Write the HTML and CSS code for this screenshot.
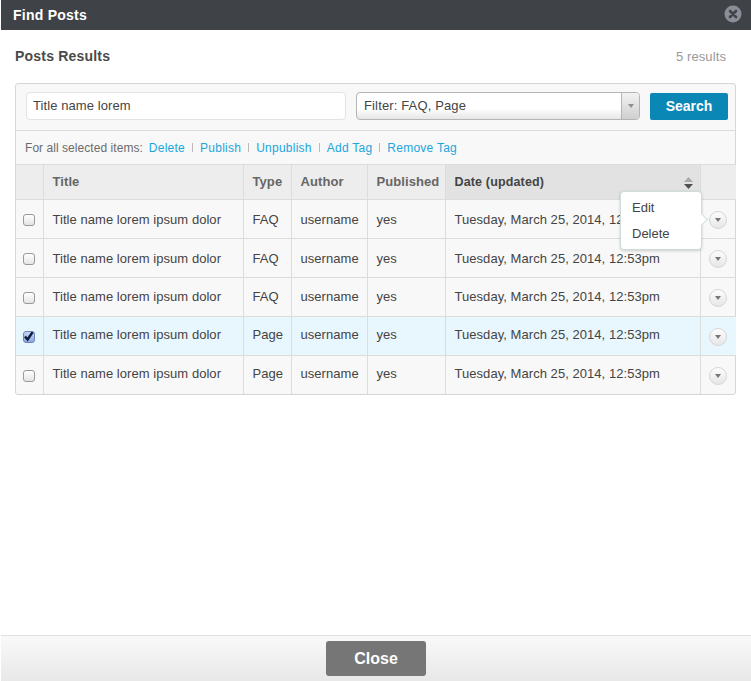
FILE: index.html
```html
<!DOCTYPE html>
<html lang="en">
<head>
<meta charset="utf-8">
<title>Find Posts</title>
<link rel="stylesheet" href="styles.css">
</head>
<body>
<div class="dialog">
  <header class="titlebar">
    <h1 class="dialog-title">Find Posts</h1>
    <button class="dialog-x" type="button" aria-label="Close">
      <svg width="18" height="18" viewBox="0 0 18 18"><circle cx="9" cy="9" r="8.5" fill="#8b8e98"/><path d="M6 6l6 6M12 6l-6 6" stroke="#3f4247" stroke-width="2.6" stroke-linecap="round"/></svg>
    </button>
  </header>
  <main class="content">
    <div class="results-head">
      <h2 class="results-title">Posts Results</h2>
      <span class="results-count">5 results</span>
    </div>
    <section class="panel">
      <div class="searchbar">
        <input class="search-input" type="text" value="Title name lorem">
        <div class="filter">
          <span class="filter-text">Filter: FAQ, Page</span>
          <span class="filter-arrow"><svg width="6" height="4" viewBox="0 0 6 4"><path d="M0 0h6L3 4z" fill="#8f8f8f"/></svg></span>
        </div>
        <button class="search-btn" type="button">Search</button>
      </div>
      <div class="bulk">
        <span class="bulk-label">For all selected items:</span>
        <a class="bulk-link" href="#">Delete</a><span class="bulk-sep"></span>
        <a class="bulk-link" href="#">Publish</a><span class="bulk-sep"></span>
        <a class="bulk-link" href="#">Unpublish</a><span class="bulk-sep"></span>
        <a class="bulk-link" href="#">Add Tag</a><span class="bulk-sep"></span>
        <a class="bulk-link" href="#">Remove Tag</a>
      </div>
      <table class="posts">
        <colgroup>
          <col class="c-check"><col class="c-title"><col class="c-type"><col class="c-author"><col class="c-pub"><col class="c-date"><col class="c-act">
        </colgroup>
        <thead>
          <tr>
            <th></th><th>Title</th><th>Type</th><th>Author</th><th>Published</th>
            <th class="sorted">Date (updated)
              <svg class="sort-icon" width="9" height="12" viewBox="0 0 9 12"><path d="M4.5 0L9 5H0z" fill="#a9a9a9"/><path d="M4.5 12L0 7h9z" fill="#4f4f4f"/></svg>
            </th>
            <th></th>
          </tr>
        </thead>
        <tbody>
          <tr class="row-a">
            <td class="cell-check"><input class="check" type="checkbox"></td><td>Title name lorem ipsum dolor</td><td>FAQ</td><td>username</td><td>yes</td><td>Tuesday, March 25, 2014, 12:53pm</td>
            <td class="cell-act"><button class="row-btn" type="button" aria-label="Actions"><svg width="6" height="4" viewBox="0 0 6 4"><path d="M0 0h6L3 4z" fill="#777"/></svg></button></td>
          </tr>
          <tr class="row-a">
            <td class="cell-check"><input class="check" type="checkbox"></td><td>Title name lorem ipsum dolor</td><td>FAQ</td><td>username</td><td>yes</td><td>Tuesday, March 25, 2014, 12:53pm</td>
            <td class="cell-act"><button class="row-btn" type="button" aria-label="Actions"><svg width="6" height="4" viewBox="0 0 6 4"><path d="M0 0h6L3 4z" fill="#777"/></svg></button></td>
          </tr>
          <tr class="row-b">
            <td class="cell-check"><input class="check" type="checkbox"></td><td>Title name lorem ipsum dolor</td><td>FAQ</td><td>username</td><td>yes</td><td>Tuesday, March 25, 2014, 12:53pm</td>
            <td class="cell-act"><button class="row-btn" type="button" aria-label="Actions"><svg width="6" height="4" viewBox="0 0 6 4"><path d="M0 0h6L3 4z" fill="#777"/></svg></button></td>
          </tr>
          <tr class="selected">
            <td class="cell-check"><input class="check" type="checkbox" checked></td><td>Title name lorem ipsum dolor</td><td>Page</td><td>username</td><td>yes</td><td>Tuesday, March 25, 2014, 12:53pm</td>
            <td class="cell-act"><button class="row-btn" type="button" aria-label="Actions"><svg width="6" height="4" viewBox="0 0 6 4"><path d="M0 0h6L3 4z" fill="#777"/></svg></button></td>
          </tr>
          <tr>
            <td class="cell-check"><input class="check" type="checkbox"></td><td>Title name lorem ipsum dolor</td><td>Page</td><td>username</td><td>yes</td><td>Tuesday, March 25, 2014, 12:53pm</td>
            <td class="cell-act"><button class="row-btn" type="button" aria-label="Actions"><svg width="6" height="4" viewBox="0 0 6 4"><path d="M0 0h6L3 4z" fill="#777"/></svg></button></td>
          </tr>
        </tbody>
      </table>
      <div class="menu">
        <a class="menu-item" href="#">Edit</a>
        <a class="menu-item" href="#">Delete</a>
        <span class="menu-tip"></span>
      </div>
    </section>
  </main>
  <footer class="footer">
    <button class="close-btn" type="button">Close</button>
  </footer>
</div>
</body>
</html>
```
FILE: styles.css
```css
* { box-sizing: border-box; }
html, body { margin: 0; height: 100%; }
body {
  background: #fff;
  font-family: "Liberation Sans", Arial, sans-serif;
  font-size: 13px;
  color: #444;
}
.dialog {
  height: 681px;
  display: flex;
  flex-direction: column;
  padding: 0 0 0 1px;
}
.titlebar {
  height: 30px;
  flex: none;
  background: #3f4247;
  display: flex;
  align-items: center;
  justify-content: space-between;
  padding: 0 9px 0 12px;
}
.dialog-title {
  margin: 0;
  font-size: 14px;
  font-weight: bold;
  color: #fff;
  letter-spacing: 0.25px;
}
.dialog-x {
  border: 0;
  padding: 0;
  background: none;
  width: 18px;
  height: 18px;
  display: block;
  margin-bottom: 2px;
}
.dialog-x svg { display: block; }
.content {
  flex: 1;
  padding: 0 15px 0 14px;
}
.results-head {
  height: 53px;
  display: flex;
  justify-content: space-between;
  align-items: center;
  padding: 0 10px 1px 0;
}
.results-title {
  margin: 0;
  font-size: 14px;
  font-weight: bold;
  color: #4a4a4a;
  letter-spacing: 0.2px;
}
.results-count {
  font-size: 13px;
  color: #999;
  letter-spacing: 0.1px;
}
.panel {
  position: relative;
  border: 1px solid #d6d6d6;
  border-radius: 3px;
  background: #f8f8f8;
}
.searchbar {
  height: 47px;
  display: flex;
  align-items: center;
  padding: 0 7px 2px 10px;
  border-bottom: 1px solid #dcdcdc;
}
.search-input {
  width: 320px;
  height: 28px;
  border: 1px solid #e2e2e2;
  border-radius: 4px;
  background: #fff;
  padding: 0 6px 2px;
  font: 13px "Liberation Sans", Arial, sans-serif;
  letter-spacing: 0.08px;
  color: #444;
  outline: 0;
}
.filter {
  margin-left: 10px;
  width: 284px;
  height: 28px;
  border: 1px solid #b5b5b5;
  border-radius: 4px;
  background: linear-gradient(#fff 60%, #e6e6e6);
  display: flex;
  align-items: center;
  justify-content: space-between;
}
.filter-text { padding: 0 0 2px 7px; color: #444; letter-spacing: 0.14px; }
.filter-arrow {
  width: 18px;
  height: 100%;
  border-left: 1px solid #b5b5b5;
  background: linear-gradient(#f2f2f2, #cfcfcf);
  border-radius: 0 3px 3px 0;
  display: flex;
  align-items: center;
  justify-content: center;
}
.search-btn {
  margin: 1px 0 0 10px;
  width: 78px;
  height: 27px;
  border: 0;
  border-radius: 2px;
  background: #0a87b5;
  color: #fff;
  font: bold 14px "Liberation Sans", Arial, sans-serif;
  padding: 0 0 2px;
}
.bulk {
  height: 34px;
  display: flex;
  align-items: center;
  padding: 0 0 0 9px;
  font-size: 12px;
  border-bottom: 1px solid #dcdcdc;
  color: #6b6b6b;
}
.bulk-label { margin-right: 6px; letter-spacing: 0.05px; }
.bulk-link { color: #1ba6dc; text-decoration: none; letter-spacing: 0.25px; }
.bulk-sep {
  width: 1px;
  height: 9px;
  background: #bbb;
  margin: 0 7px 0 7px;
}
.posts {
  width: 720px;
  table-layout: fixed;
  border-collapse: collapse;
}
.c-check { width: 27px; }
.c-title { width: 200px; }
.c-type { width: 48px; }
.c-author { width: 76px; }
.c-pub { width: 78px; }
.c-date { width: 255px; }
.c-act { width: 36px; }
.posts th, .posts td {
  border-left: 1px solid #dcdcdc;
  padding: 0 0 0 9px;
  text-align: left;
  white-space: nowrap;
  overflow: hidden;
  letter-spacing: 0.05px;
}
.posts th:first-child, .posts td:first-child { border-left: 0; }
.posts th {
  height: 34px;
  background: #ededed;
  border-bottom: 1px solid #dcdcdc;
  font-size: 13px;
  font-weight: bold;
  color: #666;
  padding-bottom: 1px;
  letter-spacing: 0.08px;
}
.posts th.sorted {
  background: #e2e2e2;
  color: #444;
  position: relative;
  font-size: 12.5px;
  letter-spacing: 0.15px;
  padding-bottom: 0;
}
.sort-icon {
  position: absolute;
  right: 7px;
  top: 12px;
}
.posts td {
  height: 39px;
  border-bottom: 1px solid #dcdcdc;
  color: #444;
  padding-bottom: 2px;
}
.posts .row-a td { padding-top: 2px; padding-bottom: 0; }
.posts .row-b td { padding-top: 0; padding-bottom: 0; }
.posts tbody tr:last-child td { border-bottom: 0; }
.selected td { background: #e8f6fe; }
.posts tr td.cell-check { padding: 0; text-align: center; }
.check {
  appearance: none;
  -webkit-appearance: none;
  display: inline-block;
  vertical-align: middle;
  width: 12px;
  height: 12px;
  margin: 0;
  border: 1px solid #9a9a9a;
  border-radius: 3px;
  background: linear-gradient(#fff, #e4e4e4);
}
.check:checked {
  border-color: #6f86b8;
  background:
    url("data:image/svg+xml,%3Csvg xmlns='http://www.w3.org/2000/svg' width='14' height='14' viewBox='0 0 14 14'%3E%3Cpath d='M3 6.5l2.6 3L11 1.5' fill='none' stroke='%23101c3c' stroke-width='2.4'/%3E%3C/svg%3E") -2px -2px no-repeat,
    linear-gradient(#c5d6f4, #8ea9e0);
}
.posts tr td.cell-act { padding: 2px 0 0 8px; }
.row-btn {
  width: 18px;
  height: 18px;
  padding: 0;
  border: 1px solid #d6d6d6;
  border-radius: 50%;
  background: linear-gradient(#fdfdfd, #e6e6e6);
  display: flex;
  align-items: center;
  justify-content: center;
}
.menu {
  position: absolute;
  left: 604px;
  top: 107px;
  width: 82px;
  height: 59px;
  background: #fff;
  border: 1px solid #cfdcd9;
  border-radius: 4px;
  box-shadow: 0 1px 3px rgba(0,0,0,.18);
  padding: 3px 0 0 11px;
}
.menu-item {
  display: block;
  height: 26px;
  line-height: 25px;
  color: #444;
  text-decoration: none;
}
.menu-tip {
  position: absolute;
  right: -5px;
  top: 23px;
  width: 9px;
  height: 9px;
  background: #fff;
  border-top: 1px solid #cfdcd9;
  border-right: 1px solid #cfdcd9;
  transform: rotate(45deg);
}
.footer {
  height: 46px;
  flex: none;
  border-top: 1px solid #e0e0e0;
  background: linear-gradient(#f9f9f9, #e8e8e8);
  display: flex;
  justify-content: center;
  align-items: flex-start;
  padding: 5px 0 0 0;
}
.close-btn {
  width: 100px;
  height: 35px;
  border: 0;
  border-radius: 3px;
  background: #767676;
  color: #fff;
  font: bold 16px "Liberation Sans", Arial, sans-serif;
  padding: 0;
}
```
